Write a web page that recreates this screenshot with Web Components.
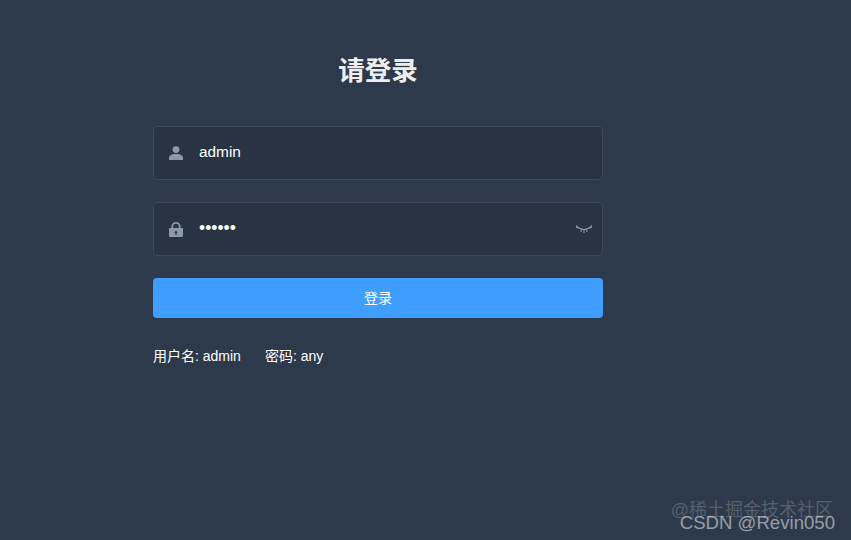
<!DOCTYPE html>
<html lang="zh"><head><meta charset="utf-8"><title>login</title>
<style>
html,body{margin:0;height:100%;}
body{background:#2d3a4b;font-family:"Liberation Sans","Noto Sans CJK SC",sans-serif;overflow:hidden;}
</style></head>
<body>
<template id="t-page"><style>
:host{display:block;width:851px;height:540px;box-sizing:border-box;padding:0 0 0 153px;position:relative;}
.form{width:450px;display:flex;flex-direction:column;}
h3{margin:0;padding-top:54px;font-size:26.5px;line-height:34px;height:34px;padding-bottom:38px;font-weight:700;color:#eee;text-align:center;}
.fields{display:flex;flex-direction:column;gap:22px;}
.tips{display:flex;gap:24px;margin-top:30px;font-size:14px;line-height:16px;color:#fff;}
</style><div class="form"><h3><slot name="title"></slot></h3><div class="fields"><slot></slot></div><div class="tips"><slot name="tips"></slot></div></div><slot name="over"></slot></template>
<template id="t-field"><style>
:host{display:flex;align-items:center;height:54px;box-sizing:border-box;border:1px solid rgba(255,255,255,.1);border-radius:5px;background:rgba(0,0,0,.1);color:#fff;font-size:15.4px;}
.ic{width:14px;height:16px;margin-left:15px;display:flex;align-items:center;justify-content:center;flex:none;}
.val{margin-left:16px;flex:1;line-height:20px;padding-bottom:2px;}
.end{display:flex;margin-right:9px;}
</style><span class="ic"><slot name="icon"></slot></span><span class="val"><slot></slot></span><span class="end"><slot name="end"></slot></span></template>
<template id="t-btn"><style>
:host{display:flex;align-items:center;justify-content:center;height:40px;box-sizing:border-box;padding-bottom:2px;background:#409eff;border-radius:4px;color:#fff;font-size:14px;}
</style><slot></slot></template>
<template id="t-mark"><style>
:host{position:absolute;right:16px;bottom:6px;display:block;width:170px;height:40px;line-height:20px;text-align:right;}
.a{position:absolute;right:2px;top:6px;white-space:nowrap;font-size:18px;color:rgba(255,255,255,.2);}
.b{position:absolute;right:0;top:19px;white-space:nowrap;font-size:18.6px;color:rgba(255,255,255,.5);}
</style><span class="a">@稀土掘金技术社区</span><span class="b">CSDN @Revin050</span></template>

<login-page>
  <span slot="title">请登录</span>
  <login-field>
    <svg slot="icon" width="14" height="14" viewBox="0 0 14 14"><circle cx="7" cy="3.6" r="3.4" fill="#8b9aa8"/><path d="M0 14v-2.2C0 9.600 2.600 8 7 8s7 1.600 7 3.800V14z" fill="#8b9aa8"/></svg>
    admin
  </login-field>
  <login-field>
    <svg slot="icon" width="14" height="15" viewBox="0 0 14 15"><path fill-rule="evenodd" fill="#8b9aa8" d="M1 6h1.400V4.600a4.600 4.600 0 0 1 9.200 0V6H13a1 1 0 0 1 1 1v7a1 1 0 0 1-1 1H1a1 1 0 0 1-1-1V7a1 1 0 0 1 1-1zM4.200 6h5.600V4.600a2.800 2.800 0 0 0-5.600 0zM7 9a1.300 1.300 0 0 0-.6 2.400V13h1.200v-1.600A1.300 1.300 0 0 0 7 9z"/></svg>
    <span style="font-size:17.5px">••••••</span>
    <svg slot="end" width="18" height="10" viewBox="0 0 18 10" fill="none" stroke="#8b9aa8" stroke-width="1.100"><path d="M1 1.500C4 4.500 6.500 5.500 9 5.500s5-1 8-4"/><path d="M1 3.500L4 4M17 3.500L14 4M6.500 5.500L6 8M11.500 5.500L12 8M9 5.500V9"/></svg>
  </login-field>
  <login-btn>登录</login-btn>
  <span slot="tips">用户名: admin</span>
  <span slot="tips">密码: any</span>
  <water-mark slot="over"></water-mark>
</login-page>
<script>
for (const [name,id] of [['login-page','t-page'],['login-field','t-field'],['login-btn','t-btn'],['water-mark','t-mark']]) {
  customElements.define(name, class extends HTMLElement {
    constructor(){super();this.attachShadow({mode:'open'}).appendChild(document.getElementById(id).content.cloneNode(true));}
  });
}
</script>
</body></html>
